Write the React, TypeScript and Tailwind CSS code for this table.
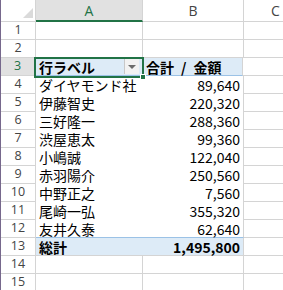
import React from "react";

const jp = { fontFamily: '"Noto Sans CJK JP", "Noto Sans", sans-serif' };
const ui = { fontFamily: '"Open Sans", "Noto Sans", sans-serif' };

const data: [string, string][] = [
  ["ダイヤモンド社", "89,640"],
  ["伊藤智史", "220,320"],
  ["三好隆一", "288,360"],
  ["渋屋恵太", "99,360"],
  ["小嶋誠", "122,040"],
  ["赤羽陽介", "250,560"],
  ["中野正之", "7,560"],
  ["尾崎一弘", "355,320"],
  ["友井久泰", "62,640"],
];

function RowHead({ n, active }: { n: number; active?: boolean }) {
  return (
    <div
      style={ui}
      className={
        active
          ? "w-[35px] shrink-0 flex items-center justify-center text-[12.5px] text-[#217346] bg-[#e1e1e1] border-r-2 border-r-[#217346] border-b border-b-[#d4d4d4]"
          : "w-[35px] shrink-0 flex items-center justify-center text-[12.5px] text-[#444] border-r border-b border-[#d4d4d4]"
      }
    >
      {n}
    </div>
  );
}

function EmptyRow({ n }: { n: number }) {
  return (
    <div className="flex h-[18px]">
      <RowHead n={n} />
      <div className="w-[107px] shrink-0 border-r border-b border-[#d4d4d4]" />
      <div className="w-[101px] shrink-0 border-r border-b border-[#d4d4d4]" />
      <div className="flex-1 border-b border-[#d4d4d4]" />
    </div>
  );
}

export default function App() {
  return (
    <div className="relative w-[283px] h-[290px] overflow-hidden bg-white border-l border-l-[#76688c]">
      {/* column headers */}
      <div className="flex h-[22px]" style={ui}>
        <div className="relative w-[35px] shrink-0 border-r border-b border-[#d4d4d4]">
          <div className="absolute right-[2px] bottom-[3px] w-0 h-0 border-l-[10px] border-l-transparent border-b-[10px] border-b-[#dadada]" />
        </div>
        <div className="w-[107px] shrink-0 flex items-center justify-center text-[14px] text-[#217346] bg-[#e1e1e1] border-r border-r-[#d4d4d4] border-b-2 border-b-[#217346]">
          A
        </div>
        <div className="w-[101px] shrink-0 flex items-center justify-center text-[14px] text-[#444] border-r border-b border-[#d4d4d4]">
          B
        </div>
        <div className="flex-1 flex items-center justify-start pl-[27px] text-[14px] text-[#444] border-b border-[#d4d4d4]">
          C
        </div>
      </div>

      <EmptyRow n={1} />
      <EmptyRow n={2} />

      {/* pivot header row */}
      <div className="flex h-[18px]" style={jp}>
        <RowHead n={3} active />
        <div className="w-[106px] shrink-0 flex items-center justify-between bg-[#ddebf7] border-b border-b-[#9bc2e6] pl-[3px]">
          <span className="text-[14px] font-bold leading-none text-black">行ラベル</span>
          <span className="mr-[3px] w-[15px] h-[15px] flex items-center justify-center bg-[#f2f2f2] border-l border-l-[#c8c8c8]">
            <span className="w-0 h-0 border-l-[4px] border-r-[4px] border-t-[4px] border-l-transparent border-r-transparent border-t-[#6b6b6b]" />
          </span>
        </div>
        <div className="w-[101px] shrink-0 flex items-center bg-[#ddebf7] border-b border-b-[#9bc2e6] border-r border-r-[#d4d4d4] pl-[4px]">
          <span className="flex items-center text-[14px] font-bold leading-none text-black">
            <span>合計</span>
            <span className="mx-[7px]">/</span>
            <span>金額</span>
          </span>
        </div>
        <div className="flex-1 border-b border-[#d4d4d4]" />
      </div>

      {data.map(([name, amount], i) => (
        <div key={name} className="flex h-[18px]" style={jp}>
          <RowHead n={i + 4} />
          <div
            className={
              i === data.length - 1
                ? "w-[107px] shrink-0 flex items-center pl-[3px] border-b border-b-[#9bc2e6]"
                : "w-[107px] shrink-0 flex items-center pl-[3px]"
            }
          >
            <span className="text-[14px] leading-none text-black">{name}</span>
          </div>
          <div
            className={
              i === data.length - 1
                ? "w-[101px] shrink-0 flex items-center justify-end pr-[3px] border-r border-r-[#d4d4d4] border-b border-b-[#9bc2e6]"
                : "w-[101px] shrink-0 flex items-center justify-end pr-[3px] border-r border-r-[#d4d4d4]"
            }
          >
            <span className="text-[14px] leading-none text-black">{amount}</span>
          </div>
          <div className="flex-1 border-b border-[#d4d4d4]" />
        </div>
      ))}

      {/* grand total */}
      <div className="flex h-[18px]" style={jp}>
        <RowHead n={13} />
        <div className="w-[107px] shrink-0 flex items-center pl-[3px] bg-[#ddebf7] border-b border-b-[#d4d4d4]">
          <span className="text-[14px] font-bold leading-none text-black">総計</span>
        </div>
        <div className="w-[101px] shrink-0 flex items-center justify-end pr-[3px] bg-[#ddebf7] border-r border-b border-[#d4d4d4]">
          <span className="text-[14px] font-bold leading-none text-black">1,495,800</span>
        </div>
        <div className="flex-1 border-b border-[#d4d4d4]" />
      </div>

      <EmptyRow n={14} />
      <EmptyRow n={15} />

      {/* active cell outline and fill handle */}
      <div className="absolute left-[33px] top-[57px] w-[110px] h-[21px] border-2 border-[#217346] pointer-events-none" />
      <div className="absolute left-[139px] top-[74px] w-[6px] h-[6px] bg-[#217346] border border-white" />
    </div>
  );
}
